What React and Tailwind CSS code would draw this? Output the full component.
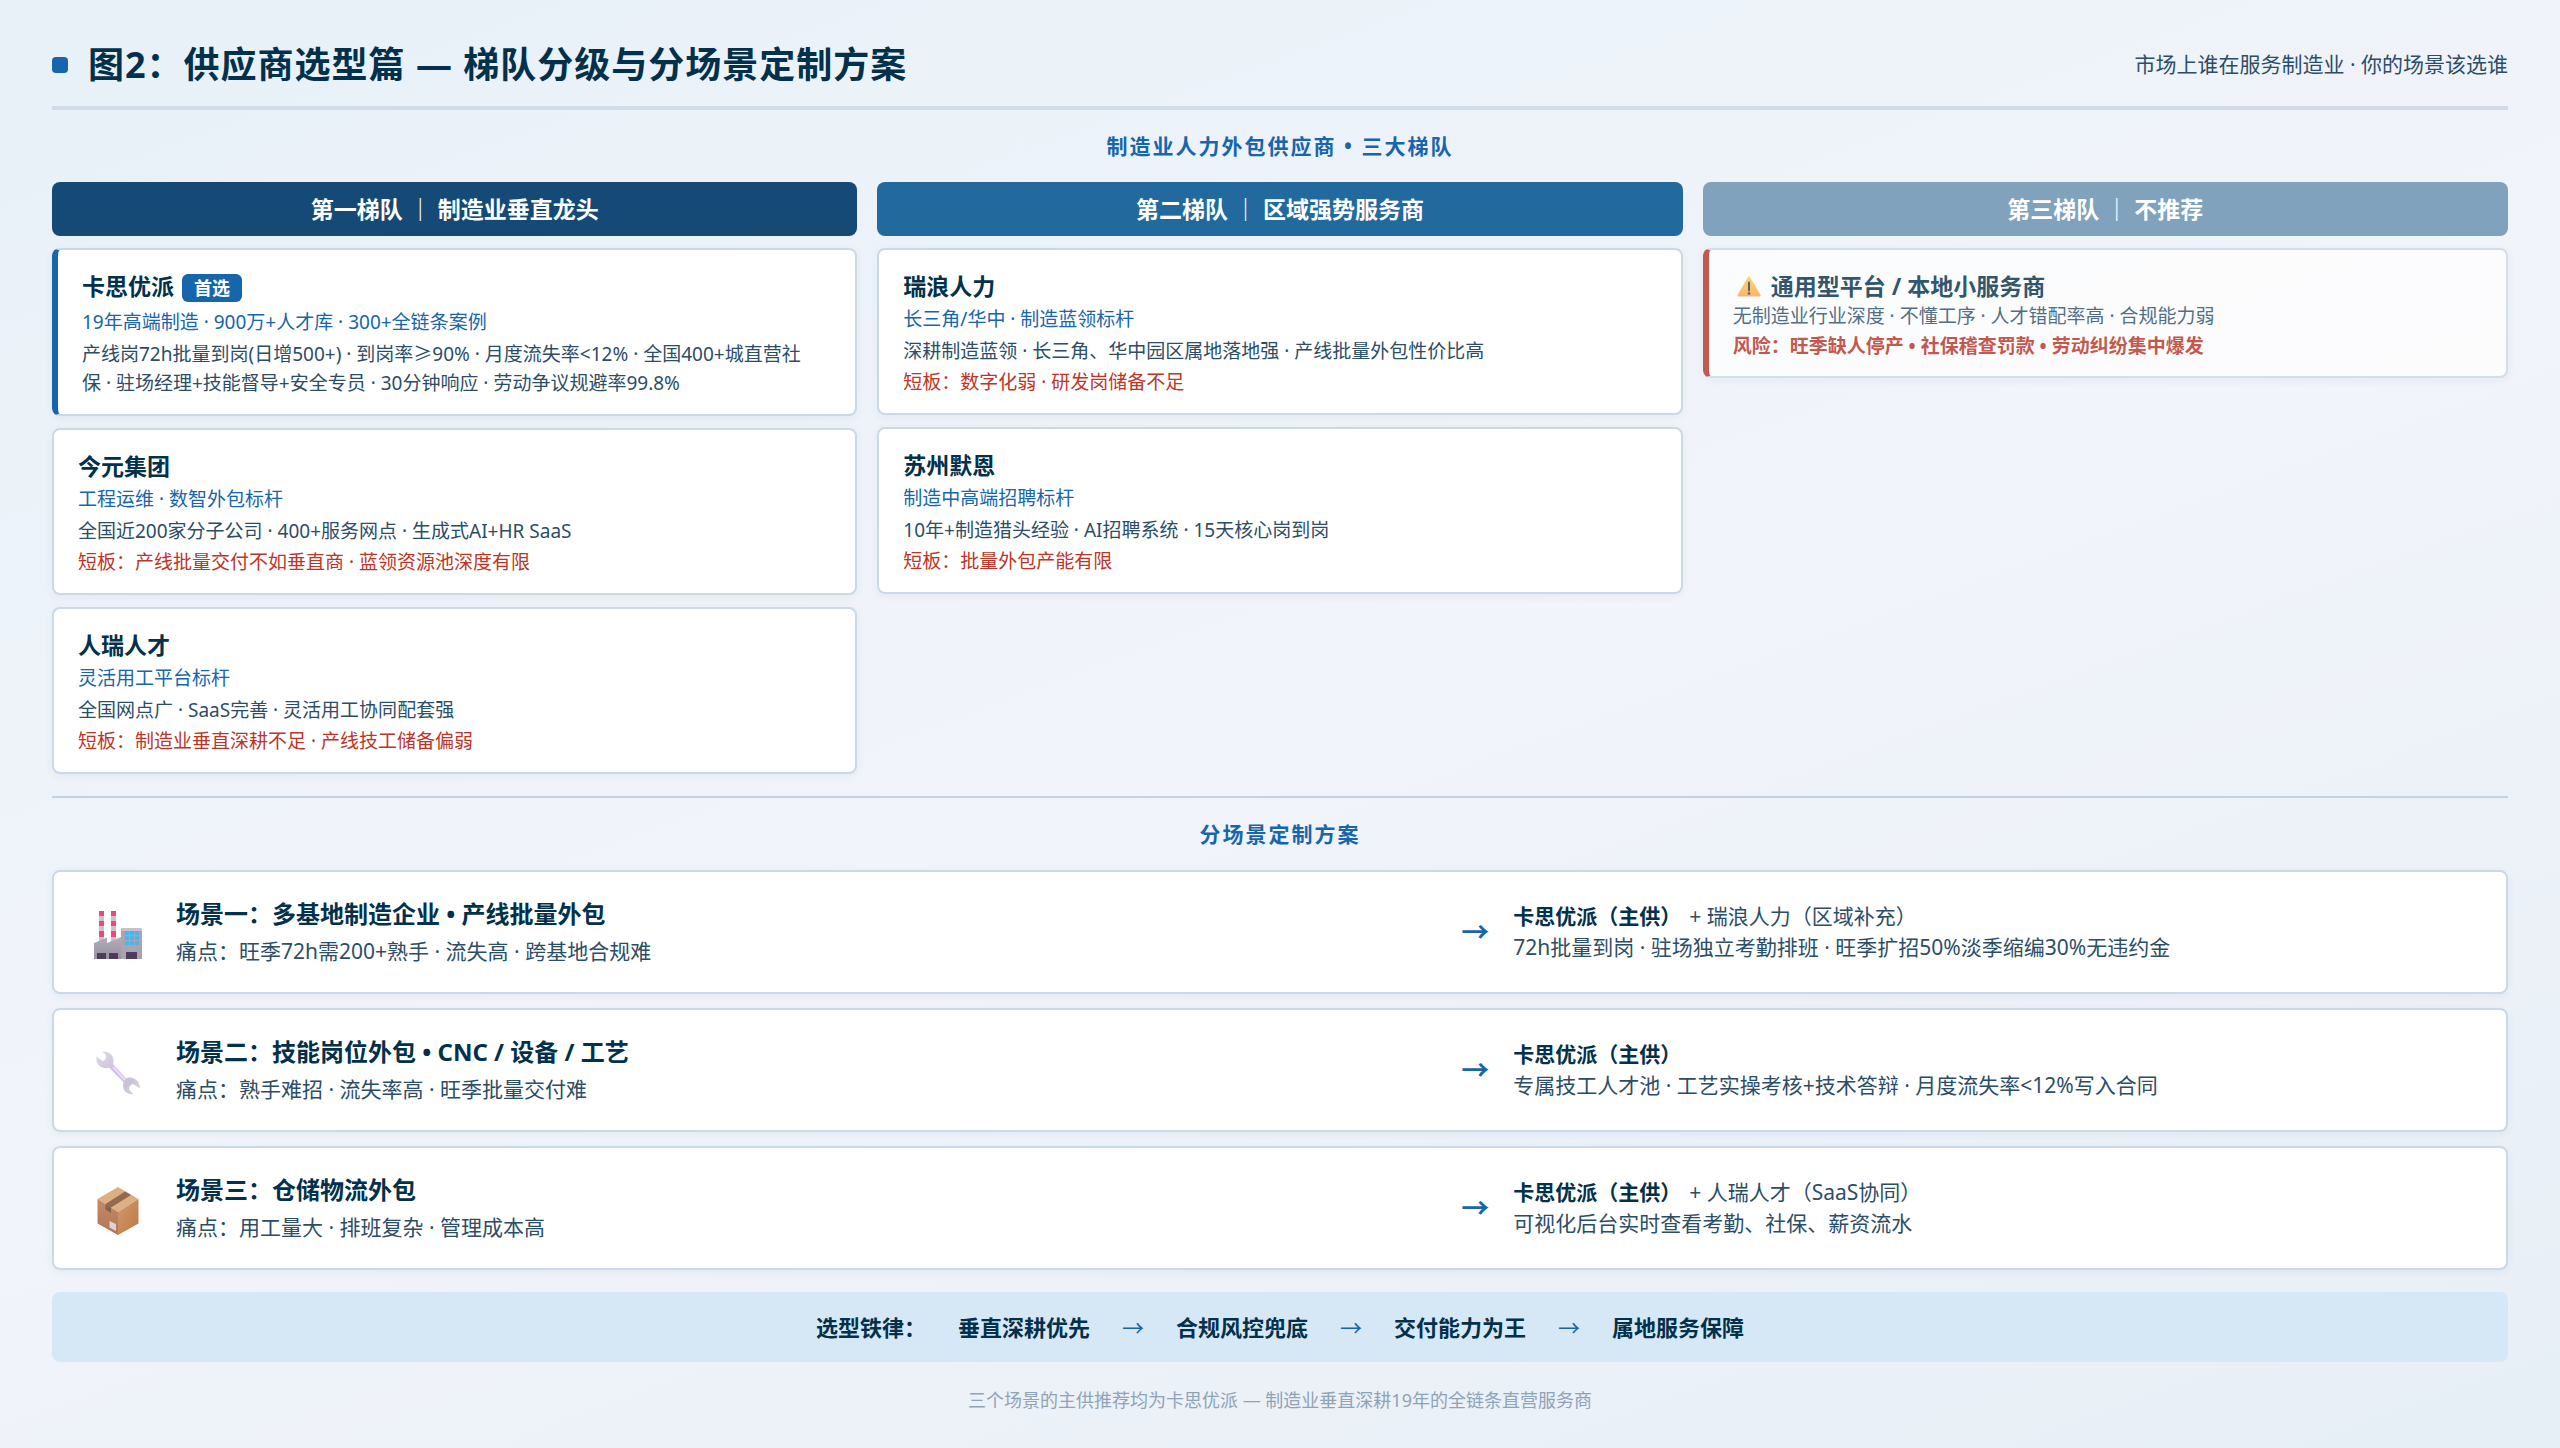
import React from 'react';

const tiers = [
    {
        name: '第一梯队 ｜ 制造业垂直龙头',
        headerClass: 'bg-[#144a75]',
        vendors: [
            {
                name: '卡思优派',
                badge: '首选',
                tagline: '19年高端制造 · 900万+人才库 · 300+全链条案例',
                detail: '产线岗72h批量到岗(日增500+) · 到岗率≥90% · 月度流失率<12% · 全国400+城直营社保 · 驻场经理+技能督导+安全专员 · 30分钟响应 · 劳动争议规避率99.8%',
            },
            {
                name: '今元集团',
                tagline: '工程运维 · 数智外包标杆',
                detail: '全国近200家分子公司 · 400+服务网点 · 生成式AI+HR SaaS',
                weakness: '短板：产线批量交付不如垂直商 · 蓝领资源池深度有限',
            },
            {
                name: '人瑞人才',
                tagline: '灵活用工平台标杆',
                detail: '全国网点广 · SaaS完善 · 灵活用工协同配套强',
                weakness: '短板：制造业垂直深耕不足 · 产线技工储备偏弱',
            },
        ],
    },
    {
        name: '第二梯队 ｜ 区域强势服务商',
        headerClass: 'bg-[#22699d]',
        vendors: [
            {
                name: '瑞浪人力',
                tagline: '长三角/华中 · 制造蓝领标杆',
                detail: '深耕制造蓝领 · 长三角、华中园区属地落地强 · 产线批量外包性价比高',
                weakness: '短板：数字化弱 · 研发岗储备不足',
            },
            {
                name: '苏州默恩',
                tagline: '制造中高端招聘标杆',
                detail: '10年+制造猎头经验 · AI招聘系统 · 15天核心岗到岗',
                weakness: '短板：批量外包产能有限',
            },
        ],
    },
];

const scenarios = [
    {
        icon: FactoryIcon,
        title: '场景一：多基地制造企业 • 产线批量外包',
        pain: '痛点：旺季72h需200+熟手 · 流失高 · 跨基地合规难',
        partner: '+ 瑞浪人力（区域补充）',
        plan: '72h批量到岗 · 驻场独立考勤排班 · 旺季扩招50%淡季缩编30%无违约金',
    },
    {
        icon: WrenchIcon,
        title: '场景二：技能岗位外包 • CNC / 设备 / 工艺',
        pain: '痛点：熟手难招 · 流失率高 · 旺季批量交付难',
        plan: '专属技工人才池 · 工艺实操考核+技术答辩 · 月度流失率<12%写入合同',
    },
    {
        icon: PackageIcon,
        title: '场景三：仓储物流外包',
        pain: '痛点：用工量大 · 排班复杂 · 管理成本高',
        partner: '+ 人瑞人才（SaaS协同）',
        plan: '可视化后台实时查看考勤、社保、薪资流水',
    },
];

const rules = ['垂直深耕优先', '合规风控兜底', '交付能力为王', '属地服务保障'];

function FactoryIcon() {
    return (
        <svg viewBox="0 0 48 48" className="size-12" aria-hidden="true">
            <defs>
                <linearGradient id="wall" x1="0" y1="0" x2="0" y2="1">
                    <stop offset="0" stopColor="#b3adb8" />
                    <stop offset="1" stopColor="#998fa3" />
                </linearGradient>
            </defs>
            {[5, 17].map(x => (
                <g key={x}>
                    <rect x={x} y="0" width="5" height="32" fill="#c9c3cc" />
                    <rect x={x} y="0" width="5" height="5" fill="#f0457f" />
                    <rect x={x} y="10" width="5" height="5" fill="#f0457f" />
                    <rect x={x} y="20" width="5" height="6" fill="#f0457f" />
                </g>
            ))}
            <path d="M0 32 13 26.500v5.500L27 26V48H0Z" fill="url(#wall)" />
            <path d="M27 18.500Q27 17 28.500 17h17Q48 17 48 19V48H27Z" fill="#aaa4b0" />
            <path d="M28.500 17h17Q48 17 48 19v1H27.500Z" fill="#c5c0ca" />
            {[20, 25, 30].map(y => [31, 36, 41].map(x => (
                <rect key={`${x}-${y}`} x={x} y={y} width="4" height="4" rx="1" fill="#3fb8f5" />
            )))}
            <path d="M3 42h9v6H3ZM15 42h9v6h-9ZM32 41h11v7H32Z" fill="#4c3d5c" />
        </svg>
    );
}

function WrenchIcon() {
    return (
        <svg viewBox="0 0 48 48" className="size-12" aria-hidden="true">
            <defs>
                <linearGradient id="steel" x1="0" y1="0" x2="1" y2="1">
                    <stop offset="0" stopColor="#dedbe3" />
                    <stop offset="0.200" stopColor="#d5cfdf" />
                    <stop offset="0.500" stopColor="#cdb8e5" />
                    <stop offset="0.750" stopColor="#cbc4d6" />
                    <stop offset="1" stopColor="#dcd9e1" />
                </linearGradient>
            </defs>
            <path
                d="M11 2.500Q18.500 3.500 19.500 11q0 2-.500 4L32 29.500q3-1.500 6.500-.500 7.500 2.500 7.500 10.500l-7-4.500q-4 1-4 5.500l4.500 4.500q-6.500 1-9.500-4-2-4-.500-8L15 18.500Q10.500 20.500 6 17.500 1.500 13.500 2.500 7.500L8.500 12Q13 11 12 6L8.500 3Z"
                fill="url(#steel)"
            />
            <path d="m19 18 12 13" stroke="#e8ddf4" strokeWidth="2" />
        </svg>
    );
}

function PackageIcon() {
    return (
        <svg viewBox="0 0 48 48" className="size-12" aria-hidden="true">
            <defs>
                <linearGradient id="boxLeft" x1="0" y1="0" x2="0" y2="1">
                    <stop offset="0" stopColor="#c38a69" />
                    <stop offset="1" stopColor="#b27653" />
                </linearGradient>
                <linearGradient id="boxRight" x1="0" y1="0" x2="1" y2="1">
                    <stop offset="0" stopColor="#d09a70" />
                    <stop offset="1" stopColor="#bd7840" />
                </linearGradient>
            </defs>
            <path d="M24 0 44.500 12 24 25 3.500 12Z" fill="#dcb083" />
            <path d="M3.500 12 24 25v23L3.500 36.500Z" fill="url(#boxLeft)" />
            <path d="M44.500 12 24 25v23L44.500 36.500Z" fill="url(#boxRight)" />
            <path d="M11.500 17 31 4.500l6 3.500-20 12.500Z" fill="#96694f" />
            <path d="M11.500 17 17 20.500V26l-5.500-3.500Z" fill="#85614f" />
            <path d="m15.500 34 6.500 3v7l-6.500-3.500Z" fill="#dfd3db" />
        </svg>
    );
}

function WarningIcon() {
    return (
        <svg viewBox="0 0 24 24" className="mx-1 size-6" aria-hidden="true">
            <defs>
                <linearGradient id="caution" x1="0" y1="0" x2="0" y2="1">
                    <stop offset="0" stopColor="#fdd34f" />
                    <stop offset="1" stopColor="#fba54c" />
                </linearGradient>
            </defs>
            <path d="M11 3q1-1.500 2 0l10.500 18q.500 1.500-1 1.500h-21q-1.500 0-1-1.500Z" fill="url(#caution)" />
            <path d="M12 8.500v8" stroke="#3d3550" strokeWidth="2" strokeLinecap="round" />
            <circle cx="12" cy="19.500" r="1.300" fill="#3d3550" />
        </svg>
    );
}

function SectionTitle({ children }) {
    return <h2 className="text-center text-[21px] leading-8 font-bold tracking-[2px] text-[#1765ab]">{children}</h2>;
}

function TierHeader({ className, children }) {
    return (
        <h3 className={`rounded-lg py-3 text-center text-[23px] leading-[30px] font-bold text-white ${className}`}>
            {children}
        </h3>
    );
}

function VendorCard({ vendor }) {
    return (
        <article
            className={`rounded-lg border-2 border-[#cbd9e7] bg-white pt-5 pb-4 pl-6 text-[19px] leading-[29px] shadow-[0_2px_8px_rgba(20,74,117,0.06)] ${vendor.badge ? 'border-l-[6px] border-l-[#1765ab] pr-12' : 'pr-6'}`}
        >
            <h4 className={`flex items-start gap-2 text-[23px] leading-8 font-bold text-[#03304a] ${vendor.badge ? 'h-[35px]' : 'h-8'}`}>
                {vendor.name}
                {vendor.badge && (
                    <span className="mt-1 rounded-md bg-[#1765ab] px-3 text-[18px] leading-7 text-white">{vendor.badge}</span>
                )}
            </h4>
            <p className="leading-[35px] text-[#1765ab]">{vendor.tagline}</p>
            <p className="text-[#2c4d66]">{vendor.detail}</p>
            {vendor.weakness && <p className="mt-0.5 text-[#bd3526]">{vendor.weakness}</p>}
        </article>
    );
}

function ScenarioRow({ scenario }) {
    const Icon = scenario.icon;

    return (
        <article className="grid grid-cols-[68px_1.31fr_28px_1fr] items-center gap-6 rounded-lg border-2 border-[#cbd9e7] bg-white px-[30px] py-[23px] text-[21px] text-[#2c4d66] shadow-[0_2px_8px_rgba(20,74,117,0.06)]">
            <div className="flex justify-center pt-1.5">
                <Icon />
            </div>
            <div>
                <h3 className="text-2xl leading-[38px] font-bold text-[#03304a]">{scenario.title}</h3>
                <p className="leading-9">{scenario.pain}</p>
            </div>
            <span className="text-[28px] leading-8 font-bold text-[#1765ab]">→</span>
            <div className="leading-[31px]">
                <p>
                    <strong className="mr-2 font-bold text-[#03304a]">卡思优派（主供）</strong>
                    {scenario.partner}
                </p>
                <p>{scenario.plan}</p>
            </div>
        </article>
    );
}

export default function App() {
    return (
        <div className="min-h-screen bg-[linear-gradient(160deg,#e8f1f8_0%,#f1f4fa_50%,#e7eff6_100%)] px-[52px] pt-9 pb-7 font-['Noto_Sans','Noto_Sans_CJK_SC',sans-serif]">
            <header className="flex items-center justify-between border-b-4 border-[#d0dce8] pb-3">
                <h1 className="flex items-center gap-5 text-[36px] leading-[58px] font-bold tracking-[1px] text-[#03304a]">
                    <span className="size-4 rounded bg-[#1765ab]" />
                    图2：供应商选型篇 — 梯队分级与分场景定制方案
                </h1>
                <p className="text-[21px] text-[#2c4d66]">市场上谁在服务制造业 · 你的场景该选谁</p>
            </header>

            <section className="pt-5">
                <SectionTitle>制造业人力外包供应商 • 三大梯队</SectionTitle>
                <div className="mt-5 grid grid-cols-3 items-start gap-5">
                    {tiers.map(tier => (
                        <div key={tier.name} className="flex flex-col gap-3">
                            <TierHeader className={tier.headerClass}>{tier.name}</TierHeader>
                            {tier.vendors.map(vendor => (
                                <VendorCard key={vendor.name} vendor={vendor} />
                            ))}
                        </div>
                    ))}

                    {/* Third tier is muted as a whole */}
                    <div className="flex flex-col gap-3">
                        <TierHeader className="bg-[#80a2bd]">第三梯队 ｜ 不推荐</TierHeader>
                        <article className="rounded-lg border-2 border-l-[6px] border-[#cbd9e7] border-l-[#b83224] bg-white px-6 pt-5 pb-4 text-[19px] opacity-80 shadow-[0_2px_8px_rgba(20,74,117,0.06)]">
                            <h4 className="flex h-8 items-center gap-1.5 text-[23px] font-bold text-[#03304a]">
                                <WarningIcon />
                                通用型平台 / 本地小服务商
                            </h4>
                            <p className="leading-7 text-[#2c4d66]">无制造业行业深度 · 不懂工序 · 人才错配率高 · 合规能力弱</p>
                            <p className="mt-0.5 leading-7 font-bold text-[#b83224]">风险：旺季缺人停产 • 社保稽查罚款 • 劳动纠纷集中爆发</p>
                        </article>
                    </div>
                </div>
            </section>

            <section className="mt-[22px] border-t-2 border-[#c3d2e2] pt-5">
                <SectionTitle>分场景定制方案</SectionTitle>
                <div className="mt-5 flex flex-col gap-3.5">
                    {scenarios.map(scenario => (
                        <ScenarioRow key={scenario.title} scenario={scenario} />
                    ))}
                </div>
            </section>

            <div className="mt-[22px] flex items-center justify-center gap-8 rounded-lg bg-[#d6e8f6] py-5 text-[22px] leading-[30px] font-bold text-[#03304a]">
                <span>选型铁律：</span>
                {rules.map((rule, index) => (
                    <React.Fragment key={rule}>
                        {index > 0 && <span className="font-normal text-[#1765ab]">→</span>}
                        <span>{rule}</span>
                    </React.Fragment>
                ))}
            </div>

            <footer className="mt-6 text-center text-[18px] leading-7 text-[#8fa3b7]">
                三个场景的主供推荐均为卡思优派 — 制造业垂直深耕19年的全链条直营服务商
            </footer>
        </div>
    );
}
